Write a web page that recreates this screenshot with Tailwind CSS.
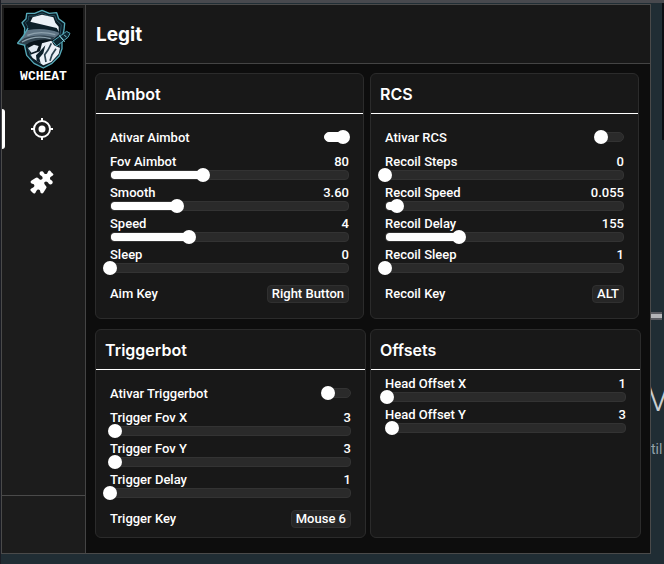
<!DOCTYPE html>
<html lang="pt-BR">
<head>
    <meta charset="UTF-8">
    <meta name="viewport" content="width=device-width, initial-scale=1.0">
    <title>WCheat - Legit</title>
    <script src="https://cdn.jsdelivr.net/npm/@tailwindcss/browser@4"></script>
</head>
<body class="relative flex min-h-screen overflow-x-hidden bg-[#202d34] pt-1 pr-[13px] pb-[10px] pl-px font-['Roboto',sans-serif] text-[13px] leading-4 font-medium text-white">
    <!-- desktop behind the window -->
    <div class="absolute inset-x-0 top-0 h-[3px] bg-[#48494e]"></div>
    <div class="absolute inset-y-0 left-0 w-px bg-[#1a1c24]"></div>
    <div class="absolute top-[3px] right-0 h-[137px] w-[2px] bg-[#0b0d12]"></div>
    <div class="absolute top-[312px] right-[2px] h-2 w-[12px] border-y-2 border-[#5c5d63] bg-[#b4b5b8]"></div>
    <div class="absolute top-[379px] left-[647px] text-[36px] leading-10 font-light text-[#c9cdd0]">V</div>
    <div class="absolute top-[439px] left-[651px] text-sm font-normal text-[#93a1aa]">til</div>

    <div class="relative flex flex-1 border border-[#4a4a4a] bg-[#0d0d0d]">
        <!-- sidebar -->
        <aside class="flex w-[84px] shrink-0 flex-col border-r border-[#444] bg-[#1c1c1c]">
            <div class="mx-[2px] mt-[3px] flex h-[82px] flex-col items-center bg-black">
                <svg class="h-[62px] w-[60px] shrink-0" viewBox="6 6 180 186" aria-hidden="true">
                    <!-- shield -->
                    <path d="M44 22L68 22L90 13L112 22L134 20L140 38L158 52L156 72L150 98L150 128L142 150L120 172L94 186L66 172L44 148L36 112L38 66L30 50L42 38Z" fill="#0a1a24" stroke="#55a9b8" stroke-width="4" stroke-linejoin="round"/>
                    <path d="M50 30L70 30L90 21L110 30L128 28L134 44L148 56L143 98L142 126L134 146L94 176L56 150L46 120L48 64L40 50L50 42Z" fill="none" stroke="#24505f" stroke-width="3"/>
                    <path d="M62 34L90 26L124 34L130 50L140 62L140 82L118 68L50 58Z" fill="#eaf0f7"/>
                    <!-- hat -->
                    <path d="M50 58C46 70 42 78 34 90L16 112L40 116C62 102 92 96 124 100L142 84L136 70Z" fill="#5f7484"/>
                    <path d="M48 46L134 66L142 80C110 68 80 66 48 72Z" fill="#0b1f2a"/>
                    <path d="M16 112L38 96C66 86 98 86 128 94L118 104C88 98 62 104 40 118Z" fill="#31434f"/>
                    <path d="M46 88C70 78 100 78 130 86M30 108C58 92 86 90 116 98" fill="none" stroke="#8ea2ae" stroke-width="4"/>
                    <path d="M16 112L34 90L48 66M16 112L40 118" fill="none" stroke="#55a9b8" stroke-width="4"/>
                    <!-- face and scarf -->
                    <path d="M42 116C64 102 92 98 122 102L106 124L72 134L52 128Z" fill="#07131b"/>
                    <path d="M48 126L66 116L80 120L74 134L58 140Z" fill="#dfe8f1"/>
                    <path d="M90 112L118 104L126 118L144 126L140 144L118 168L94 178L80 168L62 156L56 146L84 136Z" fill="#eaf0f7"/>
                    <path d="M84 136L100 118L94 142L82 156L86 172L74 164L72 148Z" fill="#0b1f2a"/>
                    <path d="M118 112L108 132L98 146L102 168M132 128L120 146L114 164" fill="none" stroke="#2b4250" stroke-width="5"/>
                    <!-- sword handle -->
                    <path d="M122 106L164 76L174 82L168 94L134 120Z" fill="#0b2530" stroke="#55a9b8" stroke-width="3"/>
                    <path d="M146 94l8 8M156 86l8 8M142 88l16 20" stroke="#8ad0da" stroke-width="3"/>
                </svg>
                <span class="font-['Liberation_Mono',monospace] text-[13px] leading-[13px] font-bold">WCHEAT</span>
            </div>
            <nav class="mt-[19px] flex flex-1 flex-col gap-[13px]">
                <a href="#legit" aria-label="Legit" class="flex h-10 items-center">
                    <span class="h-10 w-[3px] rounded-r-sm bg-white"></span>
                    <svg class="ml-[25px] size-6" viewBox="0 0 24 24" fill="none" stroke="#fff" stroke-width="2" aria-hidden="true">
                        <circle cx="12" cy="12" r="8"/>
                        <circle cx="12" cy="12" r="3.5" fill="#fff" stroke="none"/>
                        <path d="M12 1v3M12 20v3M1 12h3M20 12h3"/>
                    </svg>
                </a>
                <a href="#extras" aria-label="Extras" class="flex h-10 items-center">
                    <svg class="ml-7 size-6" viewBox="0 0 24 24" fill="#fff" aria-hidden="true">
                        <path d="M9.500 3.500C9.500 1.200 12.500.4 13.700 2.500C14.500 4.200 16.200 4.600 17.300 3.200C18 2 18 .9 19.400.6C20.500.4 20.700 1.600 21.600 2.400C22.400 3.300 23.600 3.500 23.400 4.600C23.100 6 22 6 20.800 6.700C19.400 7.800 19.800 9.500 21.500 10.300C23.600 11.500 22.800 14.500 20.500 14.500C19 14.500 18.600 13 17.400 11.900C16.500 11.200 15.400 11.200 14.700 12C13.700 13 14.400 14.400 15.500 15.400C16.600 16.400 17 17.400 16 18.500L13.500 22.500C12.400 24.200 10.500 23.400 10.300 21.700C10.200 20 8.600 19 7.200 20C6 21 6 22.500 4.800 23.400C4 24 3.200 23.200 2.500 22.500L1.200 21.300C.5 20.500 0 19.800.6 19.200C1.500 18 3 18 4 16.800C5 15.400 4 13.800 2.300 13.700C.6 13.500-.2 11.600 1.500 10.500L5.500 8C6.600 7 7.600 7.400 8.600 8.500C9.600 9.600 11 10.300 12 9.300C12.800 8.600 12.800 7.500 12.100 6.600C11 5.400 9.500 5 9.500 3.500Z"/>
                    </svg>
                </a>
            </nav>
            <div class="h-[58px] border-t border-[#4a4a4a]"></div>
        </aside>

        <div class="flex min-w-0 flex-1 flex-col">
            <header class="flex h-[59px] shrink-0 items-center border-b border-[#444] bg-[#181818] px-[10px] pt-[2px]">
                <h1 class="font-['Inter',sans-serif] text-[19px] leading-6 font-bold">Legit</h1>
            </header>

            <main class="flex flex-1 flex-col gap-[10px] pt-[9px] pb-[15px]">
                <div class="grid grid-cols-2 gap-[6px] pr-[11px] pl-[9px]">
                    <section class="rounded-md border border-[#2b2b2b] bg-[#181818]">
                        <h2 class="flex h-10 items-center border-b border-white px-[9px] font-['Inter',sans-serif] text-base font-semibold">Aimbot</h2>
                        <div class="px-[14px] py-[15px]" data-rows="aimbot"></div>
                    </section>
                    <section class="rounded-md border border-[#2b2b2b] bg-[#181818]">
                        <h2 class="flex h-10 items-center border-b border-white px-[9px] font-['Inter',sans-serif] text-base font-semibold">RCS</h2>
                        <div class="px-[14px] py-[15px]" data-rows="rcs"></div>
                    </section>
                </div>
                <div class="grid flex-1 grid-cols-2 gap-1 px-[9px]">
                    <section class="rounded-md border border-[#2b2b2b] bg-[#181818]">
                        <h2 class="flex h-10 items-center border-b border-white px-[9px] font-['Inter',sans-serif] text-base font-semibold">Triggerbot</h2>
                        <div class="px-[14px] pt-[15px] pb-[9px]" data-rows="triggerbot"></div>
                    </section>
                    <section class="rounded-md border border-[#2b2b2b] bg-[#181818]">
                        <h2 class="flex h-10 items-center border-b border-white px-[9px] font-['Inter',sans-serif] text-base font-semibold">Offsets</h2>
                        <div class="px-[14px] pt-[6px]" data-rows="offsets"></div>
                    </section>
                </div>
            </main>
        </div>
    </div>

    <script>
        // pos = slider position in percent, value = text shown on the right
        const panels = {
            aimbot: {
                toggle: { label: 'Ativar Aimbot', on: true },
                sliders: [
                    { label: 'Fov Aimbot', value: '80', pos: 39 },
                    { label: 'Smooth', value: '3.60', pos: 28 },
                    { label: 'Speed', value: '4', pos: 33 },
                    { label: 'Sleep', value: '0', pos: 0 }
                ],
                key: { label: 'Aim Key', value: 'Right Button' }
            },
            rcs: {
                toggle: { label: 'Ativar RCS', on: false },
                sliders: [
                    { label: 'Recoil Steps', value: '0', pos: 0 },
                    { label: 'Recoil Speed', value: '0.055', pos: 5 },
                    { label: 'Recoil Delay', value: '155', pos: 31 },
                    { label: 'Recoil Sleep', value: '1', pos: 0 }
                ],
                key: { label: 'Recoil Key', value: 'ALT' }
            },
            triggerbot: {
                toggle: { label: 'Ativar Triggerbot', on: false },
                sliders: [
                    { label: 'Trigger Fov X', value: '3', pos: 2 },
                    { label: 'Trigger Fov Y', value: '3', pos: 2 },
                    { label: 'Trigger Delay', value: '1', pos: 0 }
                ],
                key: { label: 'Trigger Key', value: 'Mouse 6' }
            },
            offsets: {
                sliders: [
                    { label: 'Head Offset X', value: '1', pos: 1 },
                    { label: 'Head Offset Y', value: '3', pos: 3 }
                ]
            }
        };

        function toggleRow(id, t) {
            return `
                <div class="mb-2 flex h-[17px] items-start justify-between">
                    <label for="${id}-on" class="self-end">${t.label}</label>
                    <input id="${id}-on" type="checkbox" ${t.on ? 'checked' : ''} class="mt-[3px] flex h-[10px] w-[25px] appearance-none items-center rounded-full border border-[#333] bg-[#2a2a2a] before:-ml-[6px] before:size-[14px] before:shrink-0 before:rounded-full before:bg-white checked:border-white checked:bg-white checked:before:ml-[11px]">
                </div>`;
        }

        function sliderRow(id, s) {
            return `
                <div>
                    <div class="flex justify-between">
                        <label for="${id}">${s.label}</label>
                        <output for="${id}">${s.value}</output>
                    </div>
                    <div class="grid grid-rows-[10px] items-center">
                        <div class="col-start-1 row-start-1 h-[10px] overflow-hidden rounded-[4px] border border-[#333] bg-[#2a2a2a]">
                            <div class="h-full rounded-l-[3px] bg-white" style="width: ${s.pos}%"></div>
                        </div>
                        <input id="${id}" type="range" min="0" max="100" value="${s.pos}" class="z-10 col-start-1 row-start-1 -mx-[7px] -my-[2px] h-[14px] appearance-none bg-transparent [&::-webkit-slider-thumb]:size-[14px] [&::-webkit-slider-thumb]:appearance-none [&::-webkit-slider-thumb]:rounded-full [&::-webkit-slider-thumb]:bg-white">
                    </div>
                </div>`;
        }

        function keyRow(id, k) {
            return `
                <div class="mt-3 flex h-[18px] items-center justify-between">
                    <span id="${id}-key">${k.label}</span>
                    <button type="button" aria-describedby="${id}-key" class="h-[18px] rounded-[4px] border border-[#303030] bg-[#262626] px-1">${k.value}</button>
                </div>`;
        }

        document.querySelectorAll('[data-rows]').forEach((el) => {
            const id = el.dataset.rows;
            const panel = panels[id];
            const sliders = panel.sliders.map((s, i) => sliderRow(`${id}-${i}`, s)).join('');
            el.innerHTML =
                (panel.toggle ? toggleRow(id, panel.toggle) : '') +
                `<div class="flex flex-col gap-[5px]">${sliders}</div>` +
                (panel.key ? keyRow(id, panel.key) : '');
        });

        // keep the white fill under the thumb while dragging
        document.querySelectorAll('input[type=range]').forEach((input) => {
            input.addEventListener('input', () => {
                input.previousElementSibling.firstElementChild.style.width = `${input.value}%`;
            });
        });
    </script>
</body>
</html>
